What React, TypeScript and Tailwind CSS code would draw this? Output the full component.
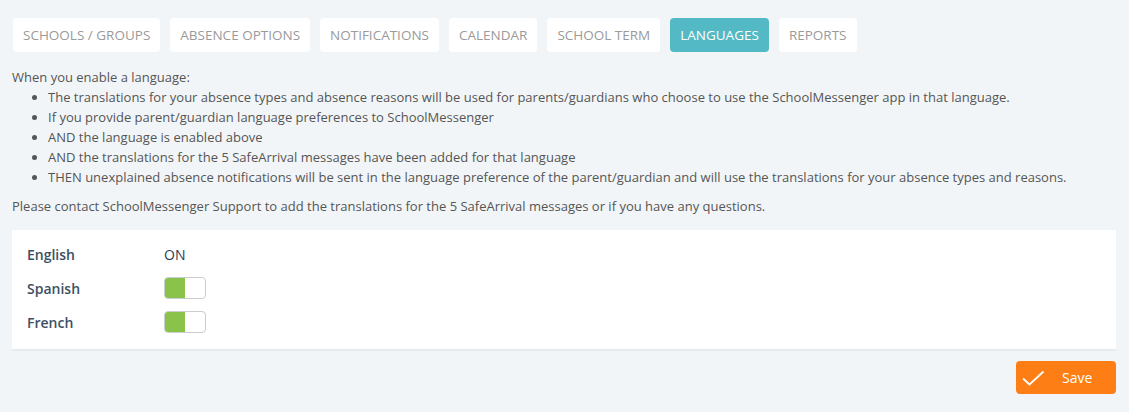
import React, { useState } from "react";

const tabs = [
  "Schools / Groups",
  "Absence Options",
  "Notifications",
  "Calendar",
  "School Term",
  "Languages",
  "Reports",
];

const bullets = [
  "The translations for your absence types and absence reasons will be used for parents/guardians who choose to use the SchoolMessenger app in that language.",
  "If you provide parent/guardian language preferences to SchoolMessenger",
  "AND the language is enabled above",
  "AND the translations for the 5 SafeArrival messages have been added for that language",
  "THEN unexplained absence notifications will be sent in the language preference of the parent/guardian and will use the translations for your absence types and reasons.",
];

const Toggle: React.FC<{ on: boolean; onClick: () => void }> = ({ on, onClick }) => (
  <button
    onClick={onClick}
    className="flex h-[22px] w-[42px] overflow-hidden rounded-[4px] border border-[#c9cdd1] bg-white"
  >
    <span className={`h-full w-[20px] ${on ? "bg-[#8bc34a]" : "bg-white"}`} />
  </button>
);

const App: React.FC = () => {
  const [langs, setLangs] = useState({ Spanish: true, French: true });

  return (
    <div className="min-h-[412px] bg-[#f2f5f8] px-[12px] pt-[18px] font-['Open_Sans',sans-serif] text-[13px] text-[#555]">
      {/* Tabs */}
      <div className="flex gap-[10px] pl-[1px]">
        {tabs.map((t) => (
          <div
            key={t}
            className={`flex h-[34px] items-center rounded-[4px] px-[10px] text-[13.5px] uppercase ${
              t === "Languages" ? "bg-[#52b9c5] text-white" : "bg-white text-[#9a9a9a]"
            }`}
          >
            {t}
          </div>
        ))}
      </div>

      {/* Info text */}
      <div className="mt-[15px] leading-[20px]">
        <p>When you enable a language:</p>
        <ul className="list-disc pl-[36px]">
          {bullets.map((b) => (
            <li key={b}>{b}</li>
          ))}
        </ul>
        <p className="mt-[9px]">
          Please contact SchoolMessenger Support to add the translations for the 5 SafeArrival messages or if you have any questions.
        </p>
      </div>

      {/* Languages panel */}
      <div className="mt-[14px] mr-[1px] flex flex-col gap-[12px] border-b-2 border-[#e6eaee] bg-white px-[15px] pt-[13px] pb-[16px]">
        <div className="flex h-[22px] items-center">
          <span className="w-[137px] text-[14px] font-semibold text-[#3c5064]">English</span>
          <span className="text-[14px] text-[#2c3e50]">ON</span>
        </div>
        {(["Spanish", "French"] as const).map((l) => (
          <div key={l} className="flex h-[22px] items-center">
            <span className="w-[137px] text-[14px] font-semibold text-[#3c5064]">{l}</span>
            <Toggle on={langs[l]} onClick={() => setLangs({ ...langs, [l]: !langs[l] })} />
          </div>
        ))}
      </div>

      {/* Save */}
      <div className="mt-[10px] mr-[1px] flex justify-end">
        <button className="flex h-[33px] w-[100px] items-center rounded-[4px] bg-[#fd7e14] pl-[6px] text-[14px] text-white">
          <svg width="23" height="16" viewBox="0 0 23 16" fill="none" stroke="white" strokeWidth="1.8">
            <path d="M1 8.5 L7.5 14.5 L21.5 1.5" />
          </svg>
          <span className="ml-[17px]">Save</span>
        </button>
      </div>
    </div>
  );
};

export default App;
